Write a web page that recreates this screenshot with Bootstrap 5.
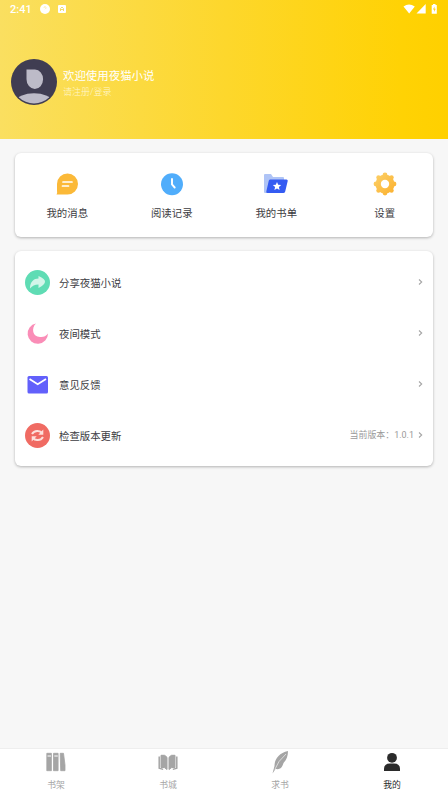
<!DOCTYPE html>
<html lang="zh-CN">
<head>
<meta charset="utf-8">
<meta name="viewport" content="width=device-width, initial-scale=1">
<title>我的</title>
<link href="https://cdn.jsdelivr.net/npm/bootstrap@5.3.0/dist/css/bootstrap.min.css" rel="stylesheet">
<style>
body{background:#f7f7f7;font-family:Roboto,"Noto Sans CJK SC",sans-serif;font-size:10.4px;line-height:16px;color:#3c3c42;height:798px;overflow:hidden}
svg{display:block;flex:none}
.hero{height:139px;background:linear-gradient(90deg,#fadf60 0%,#fdd72c 50%,#ffd204 90%,#ffd000 100%);color:#fff}
.status{height:18px;padding:0 10px;font-size:11px}
.status-time{width:30px;padding-top:2px;font-weight:500}
.profile{padding:41px 0 0 11px;gap:6px}
.greeting{padding-top:3px}
.hello{font-size:11.45px;line-height:17px}
.login{font-size:9px;line-height:15px;color:#fff6cc;font-weight:300}
.panel{margin:0 15px;border-radius:6px;background:#fff;box-shadow:0 1px 3px rgba(0,0,0,.28)}
.shortcuts{height:84px;margin-top:14px;padding:19px 0 0}
.shortcuts .col:last-child{padding-left:8px}
.shortcuts svg{margin-bottom:10px}
.settings{height:215px;margin-top:14px;padding:6px 9px 0 10px}
.setting{height:50.9px}
.setting-icon{width:25px;margin-right:9px}
.setting-label{padding-top:3px}
.version{font-size:8.95px;color:#9a9a9a}
.tabs{height:50px;background:#fff;border-top:1px solid #eee;font-size:8.8px;line-height:13px;color:#a5a5a5}
.tabs .col{padding-top:1px}
.tabs svg{margin-bottom:5px}
.tabs .current{color:#2b2b2b}
</style>
</head>
<body class="d-flex flex-column">
<header class="hero">
  <div class="status d-flex align-items-center">
    <span class="status-time">2:41</span>
    <svg width="10" height="10" viewBox="0 0 10 10"><circle cx="5" cy="5" r="5" fill="#fff"/><path d="M4 3.800a1 1 0 1 1 1.700.7L5 5.200" fill="none" stroke="#f9e48c" stroke-width=".7"/></svg>
    <svg class="ms-2" width="8" height="8" viewBox="0 0 8 8"><rect width="8" height="8" rx="1" fill="#fff"/><path d="M2.500 6V3.500L4 2l1.500 1.500V6M2.500 4.500h3" fill="none" stroke="#f1d95c" stroke-width=".9"/></svg>
    <svg class="ms-auto" width="36" height="12" viewBox="0 0 36 12"><path d="M1.500 3.500Q7-.5 12.800 3.500L7.200 10.500ZM14.500 10.500 23.700 1v9.500Z" fill="#fff"/><path d="M29.700 2h1.300V1h2.500v1h1.300v8.700h-5.100Z" fill="#fff"/><path d="M32.500 3.500 31 6.500h1.200V9L33.700 5.800h-1.200Z" fill="#ffd112"/></svg>
  </div>
  <div class="profile d-flex align-items-center">
    <svg width="46" height="46" viewBox="0 0 46 46"><defs><clipPath id="face"><circle cx="23" cy="23" r="21.500"/></clipPath></defs><circle cx="23" cy="23" r="23" fill="#403d52"/><path d="M15.500 10.500H24a8.300 9.700 0 1 1-8.500 9.700Z" fill="#bdbbc8"/><ellipse cx="23" cy="41.500" rx="17" ry="7.200" fill="#bdbbc8" clip-path="url(#face)"/></svg>
    <div class="greeting"><div class="hello">欢迎使用夜猫小说</div><div class="login">请注册/登录</div></div>
  </div>
</header>

<section class="panel shortcuts">
  <div class="row row-cols-4 g-0 text-center">
    <div class="col"><svg class="mx-auto" width="24" height="24" viewBox="0 0 24 24"><path d="M1.500 22.500q1-1.500 .5-4V12A10.500 10.500 0 1 1 12.500 22.500Z" fill="#fbb938"/><path d="M8 10h9M7.500 14h6" stroke="#fff" stroke-width="1.700" stroke-linecap="round"/></svg>我的消息</div>
    <div class="col"><svg class="mx-auto" width="24" height="24" viewBox="0 0 24 24"><circle cx="12" cy="12.300" r="11" fill="#50adfb"/><path d="M12 7v5.500l2.700 3" fill="none" stroke="#fff" stroke-width="1.900" stroke-linecap="round"/></svg>阅读记录</div>
    <div class="col"><svg class="mx-auto" width="24" height="24" viewBox="0 0 24 24"><path d="M0 3q0-1 1-1h6l2 3h10q1 0 1 1v3H6L3 21H1q-1 0-1-1Z" fill="#afc4f6"/><path d="M6 7.500h16.500q1.500 0 1.200 1.500l-2.500 10.500q-.4 1.500-2 1.500H3.500q-1.500 0-1.200-1.500L4.700 9q.2-1.500 1.300-1.500Z" fill="#345bf2"/><path d="m13 10 1.200 2.700 3 .3-2.300 2 .7 3-2.600-1.500-2.600 1.500.7-3-2.300-2 3-.3Z" fill="#fff"/></svg>我的书单</div>
    <div class="col"><svg class="mx-auto" width="24" height="24" viewBox="0 0 24 24"><defs><linearGradient id="gold" gradientUnits="userSpaceOnUse" x1="2" y1="2" x2="22" y2="22"><stop stop-color="#fcd068"/><stop offset="1" stop-color="#fbb02e"/></linearGradient></defs><g fill="url(#gold)"><circle cx="12" cy="12" r="9.500"/><circle cx="12" cy="3" r="2.400"/><circle cx="12" cy="21" r="2.400"/><circle cx="3" cy="12" r="2.400"/><circle cx="21" cy="12" r="2.400"/><circle cx="5.500" cy="5.500" r="2.200"/><circle cx="18.500" cy="5.500" r="2.200"/><circle cx="5.500" cy="18.500" r="2.200"/><circle cx="18.500" cy="18.500" r="2.200"/></g><circle cx="12" cy="12" r="4.200" fill="#fff"/></svg>设置</div>
  </div>
</section>

<section class="panel settings">
  <div class="setting d-flex align-items-center">
    <div class="setting-icon"><svg width="25" height="25" viewBox="0 0 25 25"><circle cx="12.500" cy="12.500" r="12.500" fill="#5fdcb4"/><path d="M5 18.500C5 11.500 9 8.500 13.500 8.500V6q7 3 6.500 6t-6.500 6v-3.500c-4 0-6 1.300-8.500 4Z" fill="#d3f5e9"/></svg></div>
    <span class="setting-label">分享夜猫小说</span>
    <svg class="ms-auto" width="6" height="8" viewBox="0 0 6 8"><path d="m1 1.500 2.700 2.500L1 6.500" fill="none" stroke="#a6a6a6" stroke-width="1.100"/></svg>
  </div>
  <div class="setting d-flex align-items-center">
    <div class="setting-icon"><svg width="25" height="25" viewBox="0 0 25 25"><path d="M11 2.500A10.200 10.200 0 1 0 23 12.500A8.800 8.800 0 0 1 15 16C7.500 16 6 7 11 2.500Z" fill="#fa8db7"/></svg></div>
    <span class="setting-label">夜间模式</span>
    <svg class="ms-auto" width="6" height="8" viewBox="0 0 6 8"><path d="m1 1.500 2.700 2.500L1 6.500" fill="none" stroke="#a6a6a6" stroke-width="1.100"/></svg>
  </div>
  <div class="setting d-flex align-items-center">
    <div class="setting-icon"><svg width="25" height="25" viewBox="0 0 25 25"><rect x="2.500" y="4" width="20.500" height="17.500" rx="1.500" fill="#6260fb"/><path d="m4.500 7 8.200 5.300L21 7" fill="none" stroke="#fff" stroke-width="1.800"/></svg></div>
    <span class="setting-label">意见反馈</span>
    <svg class="ms-auto" width="6" height="8" viewBox="0 0 6 8"><path d="m1 1.500 2.700 2.500L1 6.500" fill="none" stroke="#a6a6a6" stroke-width="1.100"/></svg>
  </div>
  <div class="setting d-flex align-items-center">
    <div class="setting-icon"><svg width="25" height="25" viewBox="0 0 25 25"><circle cx="12.500" cy="12.500" r="12.500" fill="#f06b63"/><path d="M7 11q2-3.500 6-3 2.500.2 4 2M18 14q-2 3.500-6 3-2.500-.2-4-2" fill="none" stroke="#fde0dc" stroke-width="2"/><path d="M18.300 6.500v5.200h-5ZM6.700 18.500v-5.200h5Z" fill="#fde0dc"/></svg></div>
    <span class="setting-label">检查版本更新</span>
    <span class="version ms-auto">当前版本：1.0.1</span>
    <svg class="ms-1" width="6" height="8" viewBox="0 0 6 8"><path d="m1 1.500 2.700 2.500L1 6.500" fill="none" stroke="#a6a6a6" stroke-width="1.100"/></svg>
  </div>
</section>

<nav class="tabs mt-auto">
  <div class="row g-0 text-center">
    <div class="col"><svg class="mx-auto" width="24" height="24" viewBox="0 0 24 24"><path d="M2.800 3.300h4.600v17.400H2.800ZM9.500 3.300h4.600v17.400H9.500ZM16.200 3.300h3.300L21 15v5.700h-4.300Z" fill="#a5a5a5" stroke="#a5a5a5" stroke-width=".8" stroke-linejoin="round"/><path d="M3.500 6h3.500M10.300 6h3.500" stroke="#fff" stroke-width="1"/></svg>书架</div>
    <div class="col"><svg class="mx-auto" width="24" height="24" viewBox="0 0 24 24"><path d="M5 5.300q4-1 6 2v12.200q-2.500-3-6-2ZM19 5.300q-4-1-6 2v12.200q2.500-3 6-2Z" fill="#a5a5a5" stroke="#a5a5a5" stroke-linejoin="round"/><path d="M3.200 6.500v11.700l4 1.200M20.800 6.500v11.700l-4 1.200" fill="none" stroke="#a5a5a5" stroke-width="1.500"/></svg>书城</div>
    <div class="col"><svg class="mx-auto" width="24" height="24" viewBox="0 0 24 24"><path d="M20 1C11 3 6.500 9 6.500 16L4.500 23.500 7.500 19c6 1 7-3 8-6 3-3 4.500-7 4.500-12Z" fill="#a5a5a5"/><path d="M18 4 11 11.500 6.800 19.500" fill="none" stroke="#fff" stroke-width=".6"/></svg>求书</div>
    <div class="col current"><svg class="mx-auto" width="24" height="24" viewBox="0 0 24 24"><circle cx="12" cy="7.800" r="4.900" fill="#2b2b2b"/><path d="M4 21v-2q0-5.500 6-5.500h4q6 0 6 5.500v2Z" fill="#2b2b2b"/></svg>我的</div>
  </div>
</nav>
<script src="https://cdn.jsdelivr.net/npm/bootstrap@5.3.0/dist/js/bootstrap.bundle.min.js"></script>
</body>
</html>
